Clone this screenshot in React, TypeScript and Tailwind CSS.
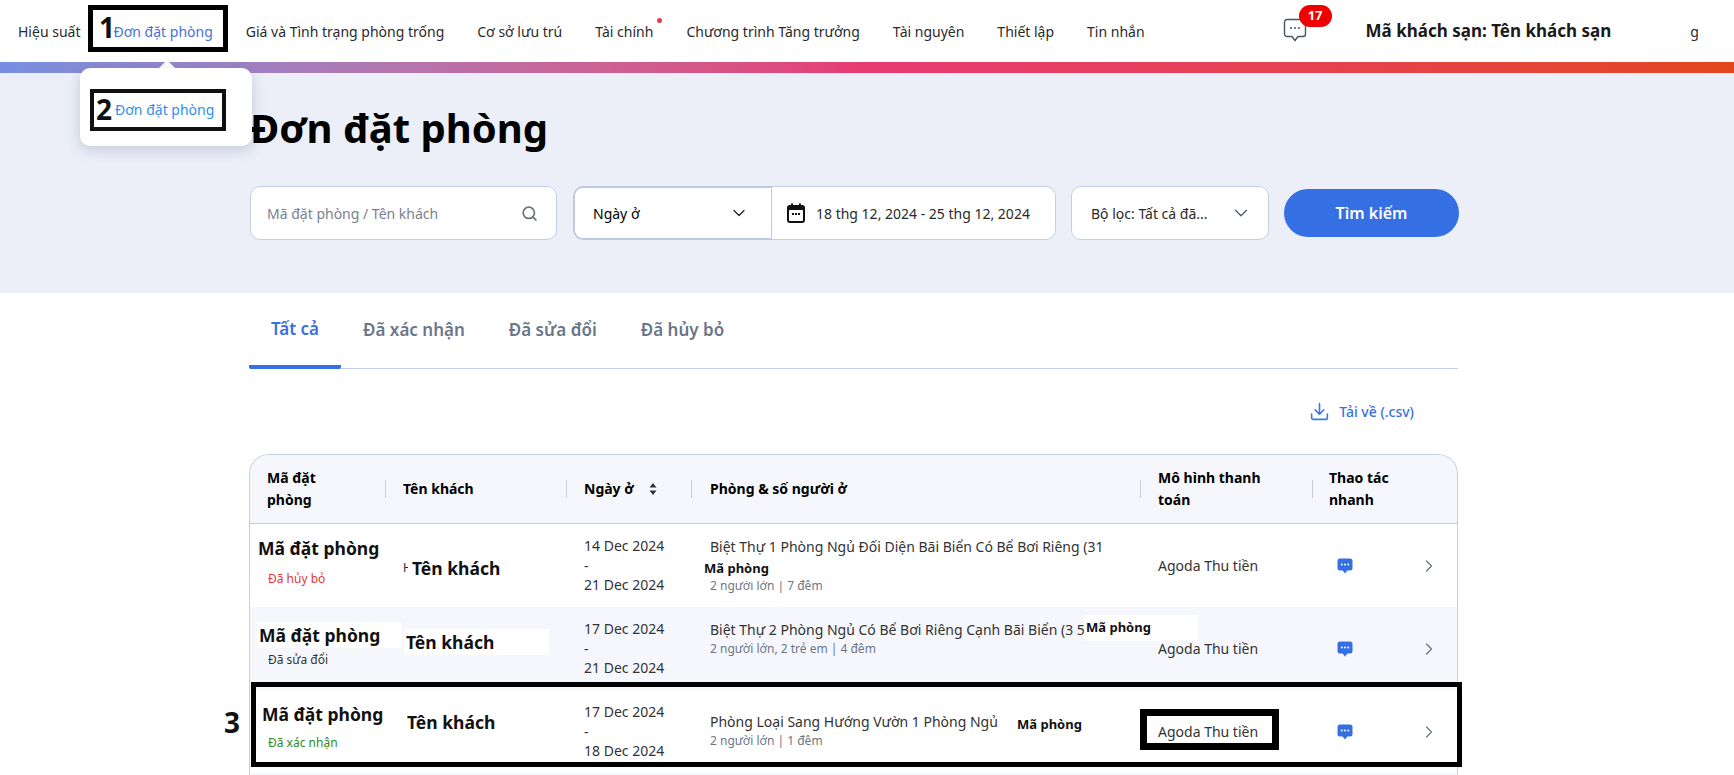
import { ChevronDown, ChevronRight, Download, Search } from "lucide-react";

const navItems = [
  "Hiệu suất",
  "Đơn đặt phòng",
  "Giá và Tình trạng phòng trống",
  "Cơ sở lưu trú",
  "Tài chính",
  "Chương trình Tăng trưởng",
  "Tài nguyên",
  "Thiết lập",
  "Tin nhắn",
];

const tabs = ["Tất cả", "Đã xác nhận", "Đã sửa đổi", "Đã hủy bỏ"];

const rows = [
  {
    rowClass: "bg-white",
    codeCell: "pt-[11px] pl-[8px]",
    codeClass: "",
    status: "Đã hủy bỏ",
    statusClass: "mt-[9px] pl-[10px] text-[#e5392f]",
    guestCell: "pt-[31px] pl-[18px]",
    guestClass: "",
    stub: "H",
    dates: ["14 Dec 2024", "21 Dec 2024"],
    roomCell: "pt-[13px]",
    room: "Biệt Thự 1 Phòng Ngủ Đối Diện Bãi Biển Có Bể Bơi Riêng (31 m²)",
    guests: "2 người lớn | 7 đêm",
  },
  {
    rowClass: "bg-[#f5f7fc]",
    codeCell: "pt-[15px] pl-[7px]",
    codeClass: "bg-white w-[145px] pl-[2px]",
    status: "Đã sửa đổi",
    statusClass: "mt-[3px] pl-[11px] text-[#333333]",
    guestCell: "pt-[22px] pl-[19px]",
    guestClass: "bg-white w-[145px] pl-[2px]",
    stub: "",
    dates: ["17 Dec 2024", "21 Dec 2024"],
    roomCell: "pt-[13px]",
    room: "Biệt Thự 2 Phòng Ngủ Có Bể Bơi Riêng Cạnh Bãi Biển (3 57)",
    guests: "2 người lớn, 2 trẻ em | 4 đêm",
  },
  {
    rowClass: "bg-white",
    codeCell: "pt-[11px] pl-[12px]",
    codeClass: "",
    status: "Đã xác nhận",
    statusClass: "mt-[7px] pl-[6px] text-[#2e8b1e]",
    guestCell: "pt-[19px] pl-[22px]",
    guestClass: "",
    stub: "",
    dates: ["17 Dec 2024", "18 Dec 2024"],
    roomCell: "pt-[22px]",
    room: "Phòng Loại Sang Hướng Vườn 1 Phòng Ngủ",
    guests: "2 người lớn | 1 đêm",
  },
];

function CalendarIcon() {
  return (
    <svg width="18" height="20" viewBox="0 0 18 20" className="shrink-0">
      <rect x="1" y="3" width="16" height="16" rx="2" fill="none" stroke="#111" strokeWidth="2" />
      <rect x="1" y="3" width="16" height="4" fill="#111" />
      <rect x="4" y="0.5" width="2" height="4" fill="#111" />
      <rect x="12" y="0.5" width="2" height="4" fill="#111" />
      <rect x="5" y="10" width="2" height="2" fill="#111" />
      <rect x="8" y="10" width="2" height="2" fill="#111" />
      <rect x="11" y="10" width="2" height="2" fill="#111" />
    </svg>
  );
}

function ChatFilled() {
  return (
    <svg width="16" height="16" viewBox="0 0 16 16">
      <path d="M3 0.5h10a2.5 2.5 0 0 1 2.5 2.5v7a2.5 2.5 0 0 1-2.5 2.5h-2.6L8 15.5l-2.4-3H3A2.5 2.5 0 0 1 .5 10V3A2.5 2.5 0 0 1 3 .5z" fill="#3470e4" />
      <circle cx="4.8" cy="6.5" r="1" fill="#fff" />
      <circle cx="8" cy="6.5" r="1" fill="#fff" />
      <circle cx="11.2" cy="6.5" r="1" fill="#fff" />
    </svg>
  );
}

function ChatOutline() {
  return (
    <svg width="24" height="24" viewBox="0 0 24 24">
      <path d="M4 1.5h16a2.5 2.5 0 0 1 2.5 2.5v12a2.5 2.5 0 0 1-2.5 2.5h-5l-3 4-3-4H4A2.5 2.5 0 0 1 1.500 16V4A2.500 2.500 0 0 1 4 1.500z" fill="none" stroke="#4b5563" strokeWidth="1.400" />
      <circle cx="8" cy="10" r="1" fill="#4b5563" />
      <circle cx="12" cy="10" r="1" fill="#4b5563" />
      <circle cx="16" cy="10" r="1" fill="#4b5563" />
    </svg>
  );
}

export default function App() {
  return (
    <div className="relative w-[1734px] h-[775px] overflow-hidden bg-white text-[#2a2a2a] font-['Noto_Sans',sans-serif]">
      {/* Top nav */}
      <div className="flex items-center h-[62px] pl-[18px] text-[14px] whitespace-nowrap overflow-hidden">
        <div className="flex items-center gap-[33px]">
          {navItems.map((item) => (
            <div key={item} className={item === "Đơn đặt phòng" ? "relative text-[#4a6fdc]" : "relative"}>
              {item}
              {item === "Tài chính" && (
                <span className="absolute -right-[9px] top-[-3px] w-[5px] h-[5px] rounded-full bg-[#e5394f]" />
              )}
            </div>
          ))}
        </div>
        <div className="relative ml-[138px] mt-[-2px]">
          <ChatOutline />
          <span className="absolute left-[16px] top-[-13px] w-[33px] h-[22px] rounded-full bg-[#f00000] text-white text-[13px] font-bold flex items-center justify-center">
            17
          </span>
        </div>
        <div className="ml-[59px] text-[17px] font-bold text-[#1a1a1a] mt-[-1px]">Mã khách sạn: Tên khách sạn</div>
        <div className="ml-[79px]">g</div>
      </div>

      <div className="h-[11px] bg-gradient-to-r from-[#7590e0] via-[#e63a72] to-[#e2471c]" />

      {/* Hero and search */}
      <div className="h-[220px] bg-[#eceff8] pl-[250px] pt-[28px]">
        <h1 className="text-[40px] leading-[54px] font-bold text-black">Đơn đặt phòng</h1>
        <div className="flex items-center mt-[31px] h-[54px]">
          <div className="flex items-center justify-between w-[307px] h-[54px] pl-[16px] pr-[18px] rounded-[10px] border border-[#c5cfe4] bg-white text-[14px] text-[#7a8190]">
            Mã đặt phòng / Tên khách
            <Search size={17} strokeWidth={2.4} color="#6b7280" />
          </div>
          <div className="flex ml-[16px] w-[483px] h-[54px] rounded-[10px] bg-white">
            <div className="flex items-center justify-between w-[199px] pl-[18px] pr-[22px] rounded-l-[10px] border-2 border-r border-[#bccae2] text-[14px] text-black">
              Ngày ở
              <ChevronDown size={20} strokeWidth={1.500} color="#222" />
            </div>
            <div className="flex items-center flex-1 gap-[11px] pl-[15px] rounded-r-[10px] border border-l-0 border-[#c5cfe4] text-[14px] whitespace-nowrap">
              <CalendarIcon />
              18 thg 12, 2024 - 25 thg 12, 2024
            </div>
          </div>
          <div className="flex items-center justify-between ml-[15px] w-[198px] h-[54px] pl-[19px] pr-[16px] rounded-[10px] border border-[#c5cfe4] bg-white text-[14px] whitespace-nowrap">
            Bộ lọc: Tất cả đã...
            <ChevronDown size={22} strokeWidth={1.300} color="#4b5563" />
          </div>
          <button className="ml-[15px] w-[175px] h-[48px] rounded-[24px] bg-[#3470e4] text-white text-[16px] font-semibold">
            Tìm kiếm
          </button>
        </div>
      </div>

      {/* Tabs, download and table */}
      <div className="ml-[249px] w-[1209px]">
        <div className="flex h-[76px] border-b border-[#c5cfe4]">
          {tabs.map((tab, i) => (
            <div
              key={tab}
              className={
                i === 0
                  ? "flex items-center h-[76px] px-[22px] text-[17px] font-semibold text-[#3a6fe0] border-b-[4px] border-[#3470e4] rounded-b-[2px]"
                  : "flex items-center h-[75px] px-[22px] text-[17px] font-semibold text-[#6c7689]"
              }
            >
              <span className="mt-[-1px]">{tab}</span>
            </div>
          ))}
        </div>

        <div className="flex items-center justify-end gap-[9px] h-[85px] pr-[44px] text-[14px] font-medium text-[#3a6fe0]">
          <Download size={21} strokeWidth={1.800} color="#3a78e6" />
          Tải về (.csv)
        </div>

        <div className="border-x border-t border-[#c5cfe4] rounded-t-[20px] overflow-hidden">
          <div className="grid grid-cols-[135px_181px_125px_449px_172px_145px] h-[69px] bg-[#f5f7fc] border-b border-[#c5cfe4] text-[14px] leading-[22px] font-bold text-black">
            <div className="flex items-center pl-[17px] w-[110px]">Mã đặt phòng</div>
            <div className="flex items-center">
              <span className="w-px h-[18px] bg-[#c5cfe4] mr-[17px]" />
              Tên khách
            </div>
            <div className="flex items-center">
              <span className="w-px h-[18px] bg-[#c5cfe4] mr-[17px]" />
              Ngày ở
              <svg width="8" height="14" viewBox="0 0 8 14" className="ml-[15px]">
                <path d="M4 1l3.500 4.500h-7z M4 13l3.500-4.500h-7z" fill="#333" />
              </svg>
            </div>
            <div className="flex items-center">
              <span className="w-px h-[18px] bg-[#c5cfe4] mr-[18px]" />
              Phòng &amp; số người ở
            </div>
            <div className="flex items-center">
              <span className="w-px h-[18px] bg-[#c5cfe4] mr-[17px] shrink-0" />
              <span className="w-[120px]">Mô hình thanh toán</span>
            </div>
            <div className="flex items-center">
              <span className="w-px h-[18px] bg-[#c5cfe4] mr-[16px] shrink-0" />
              <span className="w-[80px]">Thao tác nhanh</span>
            </div>
          </div>

          {rows.map((row) => (
            <div
              key={row.dates[0] + row.status}
              className={`grid grid-cols-[135px_181px_125px_449px_172px_145px] h-[83px] text-[14px] ${row.rowClass}`}
            >
              <div className={row.codeCell}>
                <div className={`text-[17.500px] leading-[26px] font-bold text-[#111] whitespace-nowrap ${row.codeClass}`}>
                  Mã đặt phòng
                </div>
                <div className={`text-[12px] leading-[18px] ${row.statusClass}`}>{row.status}</div>
              </div>
              <div className={`flex items-start ${row.guestCell}`}>
                {row.stub && <span className="w-[5px] h-[26px] overflow-hidden text-[12px] leading-[26px] mr-[4px]">{row.stub}</span>}
                <div className={`text-[17.500px] leading-[26px] font-bold text-[#111] whitespace-nowrap ${row.guestClass}`}>
                  Tên khách
                </div>
              </div>
              <div className="flex flex-col justify-center pl-[18px] leading-[19.500px] text-[#333]">
                <span>{row.dates[0]}</span>
                <span>-</span>
                <span>{row.dates[1]}</span>
              </div>
              <div className={`pl-[19px] pr-[30px] ${row.roomCell}`}>
                <div className="leading-[20px] text-[#333]">{row.room}</div>
                <div className="text-[12px] leading-[18px] text-[#6c7689]">{row.guests}</div>
              </div>
              <div className="flex items-center pl-[18px] text-[#333]">Agoda Thu tiền</div>
              <div className="flex items-center justify-between pl-[25px] pr-[18px]">
                <ChatFilled />
                <ChevronRight size={20} strokeWidth={1.500} color="#6c7689" />
              </div>
            </div>
          ))}
          <div className="h-[10px] bg-[#f5f7fc]" />
        </div>
      </div>

      {/* Dropdown menu */}
      <div className="absolute left-[159px] top-[60px] w-0 h-0 border-x-[8px] border-x-transparent border-b-[8px] border-b-white" />
      <div className="absolute left-[80px] top-[68px] w-[172px] h-[78px] rounded-[10px] bg-white shadow-[0_4px_14px_rgba(60,70,110,0.22)]" />
      <div className="absolute left-[115px] top-[99px] text-[14px] text-[#2f8fee]">Đơn đặt phòng</div>

      {/* Pasted labels over the room column */}
      <div className="absolute left-[700px] top-[556px] w-[90px] h-[25px] pl-[4px] bg-white text-[13px] leading-[25px] font-bold text-[#111]">Mã phòng</div>
      <div className="absolute left-[1084px] top-[615px] w-[114px] h-[26px] pl-[2px] bg-white text-[13px] leading-[24px] font-bold text-[#111]">Mã phòng</div>
      <div className="absolute left-[1017px] top-[712px] text-[13px] leading-[24px] font-bold text-[#111]">Mã phòng</div>

      {/* Annotation boxes */}
      <div className="absolute left-[88px] top-[5px] w-[140px] h-[47px] border-[5px] border-black" />
      <div className="absolute left-[90px] top-[89px] w-[136px] h-[42px] border-[4px] border-[#111]" />
      <div className="absolute left-[251px] top-[682px] w-[1211px] h-[85px] border-[5px] border-black" />
      <div className="absolute left-[1140px] top-[709px] w-[139px] h-[41px] border-x-[7px] border-t-[7px] border-b-[7px] border-black" />
      <div className="absolute left-[99px] top-[7px] text-[28px] leading-[40px] font-bold text-[#111]">1</div>
      <div className="absolute left-[96px] top-[89px] text-[28px] leading-[40px] font-bold text-[#111]">2</div>
      <div className="absolute left-[224px] top-[702px] text-[28px] leading-[40px] font-bold text-[#111]">3</div>
    </div>
  );
}
